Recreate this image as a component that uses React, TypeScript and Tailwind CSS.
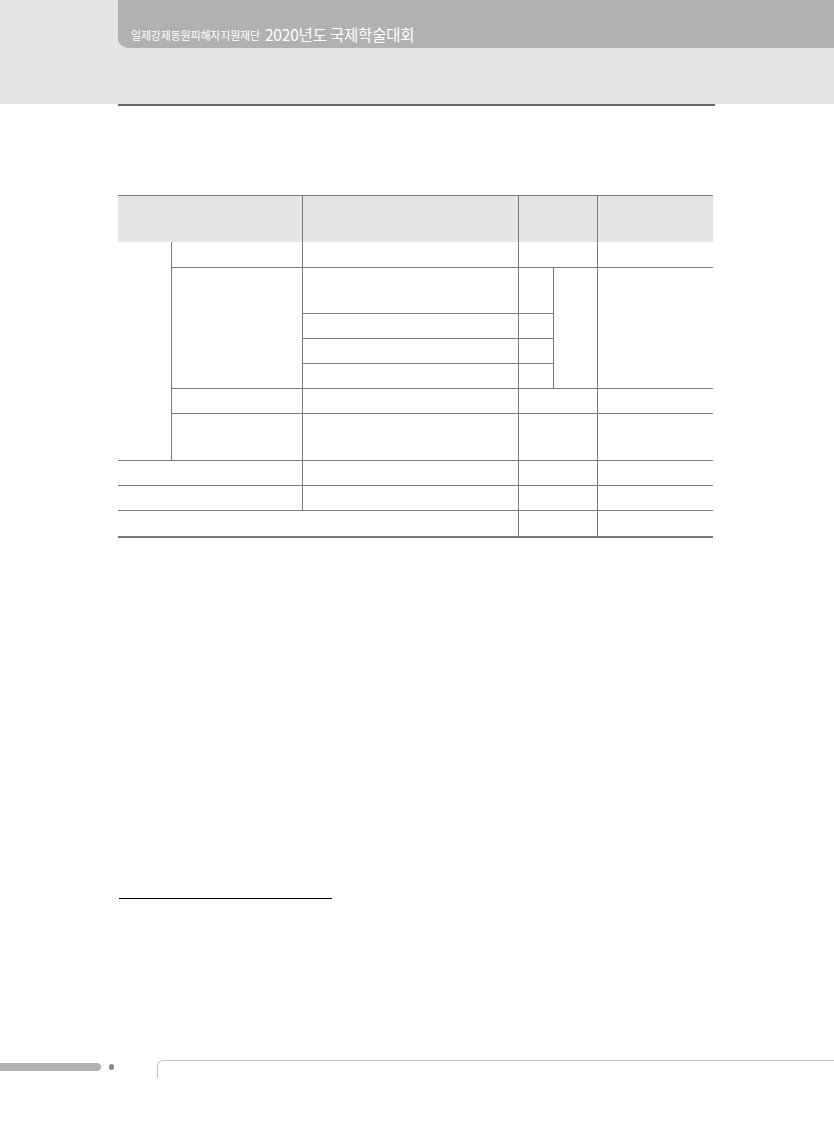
import React from "react";

const L = "border-[#7a7a7a]";

export default function App() {
  const br = `border-r ${L}`;
  const bb = `border-b ${L}`;
  return (
    <div className="relative w-[834px] h-[1131px] bg-white overflow-hidden" style={{ fontFamily: '"Noto Sans CJK KR", "Noto Sans", sans-serif' }}>
      {/* header */}
      <div className="h-[104px] bg-[#e4e4e4]">
        <div className="ml-[118px] h-[48px] bg-[#b1b1b1] rounded-bl-[10px] flex items-end pl-[13px] pb-[6px] text-white">
          <span className="text-[11px] leading-none tracking-[-0.2px] mb-[1px]">일제강제동원피해자지원재단</span>
          <span className="ml-[5px] text-[15.5px] leading-none tracking-[-0.2px]">2020년도 국제학술대회</span>
        </div>
      </div>
      <div className="ml-[118px] w-[597px] h-[2px] bg-[#666666]" />

      {/* table */}
      <table className={`ml-[118px] mt-[89px] w-[595px] table-fixed border-collapse border-t border-b-2 ${L}`}>
        <colgroup>
          <col className="w-[53px]" />
          <col className="w-[131px]" />
          <col className="w-[216px]" />
          <col className="w-[35px]" />
          <col className="w-[44px]" />
          <col className="w-[116px]" />
        </colgroup>
        <tbody>
          <tr className="h-[46px] bg-[#e4e4e4]">
            <td colSpan={2} className={br}></td>
            <td className={br}></td>
            <td colSpan={2} className={br}></td>
            <td></td>
          </tr>
          <tr className="h-[26px]">
            <td rowSpan={7} className={`${br} ${bb}`}></td>
            <td className={`${br} ${bb}`}></td>
            <td className={`${br} ${bb}`}></td>
            <td colSpan={2} className={`${br} ${bb}`}></td>
            <td className={bb}></td>
          </tr>
          <tr className="h-[46px]">
            <td rowSpan={4} className={`${br} ${bb}`}></td>
            <td className={`${br} ${bb}`}></td>
            <td className={`${br} ${bb}`}></td>
            <td rowSpan={4} className={`${br} ${bb}`}></td>
            <td rowSpan={4} className={bb}></td>
          </tr>
          <tr className="h-[25px]">
            <td className={`${br} ${bb}`}></td>
            <td className={`${br} ${bb}`}></td>
          </tr>
          <tr className="h-[25px]">
            <td className={`${br} ${bb}`}></td>
            <td className={`${br} ${bb}`}></td>
          </tr>
          <tr className="h-[25px]">
            <td className={`${br} ${bb}`}></td>
            <td className={`${br} ${bb}`}></td>
          </tr>
          <tr className="h-[25px]">
            <td className={`${br} ${bb}`}></td>
            <td className={`${br} ${bb}`}></td>
            <td colSpan={2} className={`${br} ${bb}`}></td>
            <td className={bb}></td>
          </tr>
          <tr className="h-[47px]">
            <td className={`${br} ${bb}`}></td>
            <td className={`${br} ${bb}`}></td>
            <td colSpan={2} className={`${br} ${bb}`}></td>
            <td className={bb}></td>
          </tr>
          <tr className="h-[25px]">
            <td colSpan={2} className={`${br} ${bb}`}></td>
            <td className={`${br} ${bb}`}></td>
            <td colSpan={2} className={`${br} ${bb}`}></td>
            <td className={bb}></td>
          </tr>
          <tr className="h-[25px]">
            <td colSpan={2} className={`${br} ${bb}`}></td>
            <td className={`${br} ${bb}`}></td>
            <td colSpan={2} className={`${br} ${bb}`}></td>
            <td className={bb}></td>
          </tr>
          <tr className="h-[26px]">
            <td colSpan={3} className={br}></td>
            <td colSpan={2} className={br}></td>
            <td></td>
          </tr>
        </tbody>
      </table>

      {/* footnote rule */}
      <div className="ml-[119px] mt-[360px] w-[213px] h-[1px] bg-black" />

      {/* footer */}
      <div className="mt-[161px] flex items-start">
        <div className="mt-[3px] w-[101px] h-[8px] bg-[#b1b1b1] rounded-r-[4px]" />
        <div className="ml-[8px] mt-[4px] w-[5px] h-[6px] rounded-full bg-[#8a8a8a]" />
        <div className="ml-[43px] flex-1 h-[18px] border-t border-l border-[#c4c4c4] rounded-tl-[6px]" />
      </div>
    </div>
  );
}
